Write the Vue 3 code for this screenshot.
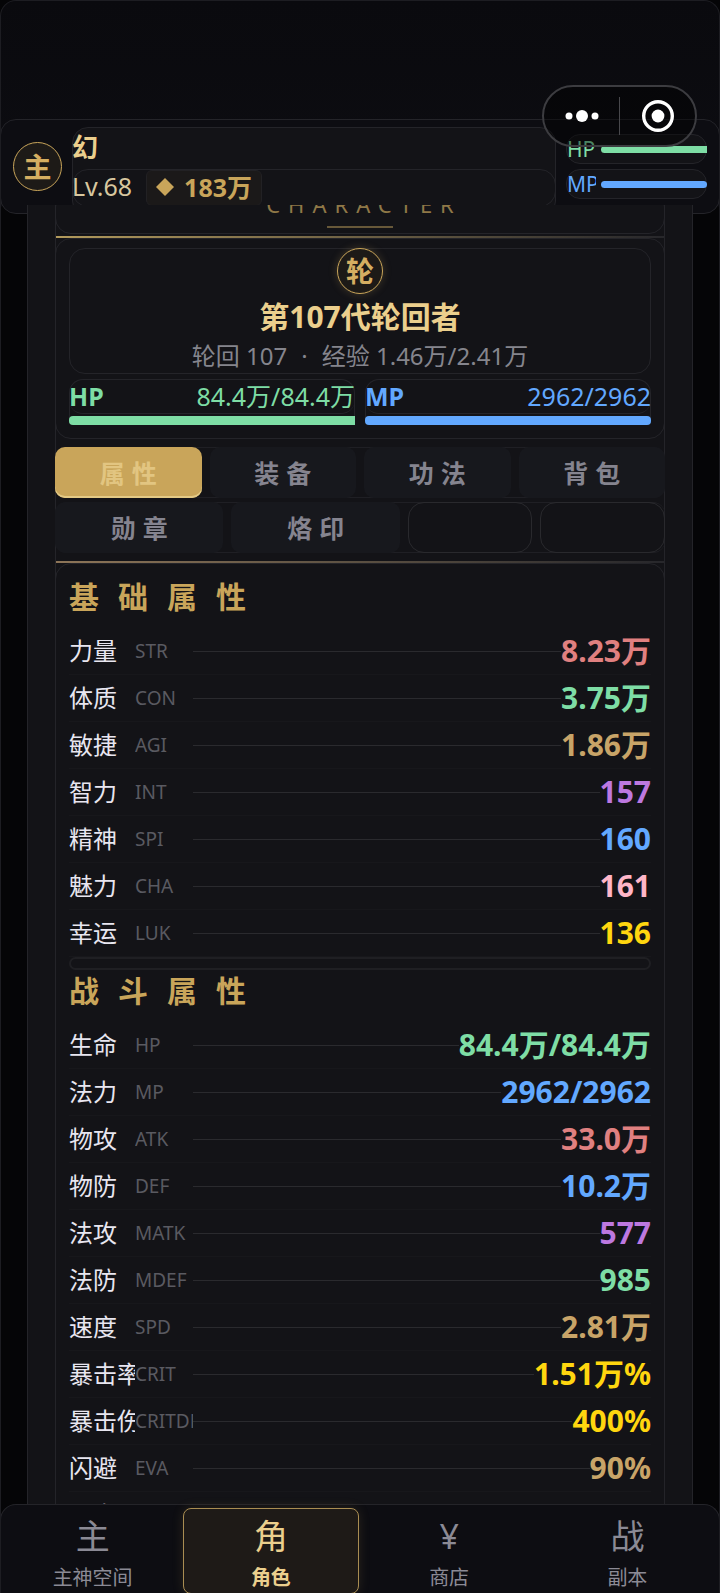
<script setup>
import { ref } from 'vue'

const baseStats = [
  { name: '力量', code: 'STR', value: '8.23万', tone: 'red' },
  { name: '体质', code: 'CON', value: '3.75万', tone: 'green' },
  { name: '敏捷', code: 'AGI', value: '1.86万', tone: 'gold' },
  { name: '智力', code: 'INT', value: '157', tone: 'purple' },
  { name: '精神', code: 'SPI', value: '160', tone: 'blue' },
  { name: '魅力', code: 'CHA', value: '161', tone: 'pink' },
  { name: '幸运', code: 'LUK', value: '136', tone: 'yellow' },
]

const combatStats = [
  { name: '生命', code: 'HP', value: '84.4万/84.4万', tone: 'green' },
  { name: '法力', code: 'MP', value: '2962/2962', tone: 'blue' },
  { name: '物攻', code: 'ATK', value: '33.0万', tone: 'red' },
  { name: '物防', code: 'DEF', value: '10.2万', tone: 'blue' },
  { name: '法攻', code: 'MATK', value: '577', tone: 'purple' },
  { name: '法防', code: 'MDEF', value: '985', tone: 'green' },
  { name: '速度', code: 'SPD', value: '2.81万', tone: 'gold' },
  { name: '暴击率', code: 'CRIT', value: '1.51万%', tone: 'yellow' },
  { name: '暴击伤害', code: 'CRITDMG', value: '400%', tone: 'yellow' },
  { name: '闪避', code: 'EVA', value: '90%', tone: 'gold' },
  { name: '吸血', code: 'LS', value: '20%', tone: 'red' },
]

const groups = [
  { title: '基础属性', rows: baseStats },
  { title: '战斗属性', rows: combatStats },
]

const tabs = ['属性', '装备', '功法', '背包']
const moreTabs = ['勋章', '烙印']
const activeTab = ref('属性')

const navItems = [
  { icon: '主', label: '主神空间' },
  { icon: '角', label: '角色' },
  { icon: '¥', label: '商店' },
  { icon: '战', label: '副本' },
]
const activeNav = ref('角色')
</script>

<template>
  <div class="app">
    <header class="header">
      <div class="avatar">主</div>
      <div class="who">
        <div class="name">幻</div>
        <div class="level-row">
          <span class="level">Lv.68</span>
          <span class="coins">
            <svg width="18" height="18" viewBox="0 0 18 18" aria-hidden="true"><path d="M9 0l9 9-9 9-9-9z" fill="#c9a55a" /></svg>
            183万
          </span>
        </div>
      </div>
      <div class="mini">
        <div class="mini-row green"><span>HP</span><i class="bar"></i></div>
        <div class="mini-row blue"><span>MP</span><i class="bar round"></i></div>
      </div>
      <div class="capsule">
        <button type="button" aria-label="更多">
          <svg width="34" height="14" viewBox="0 0 34 14"><g fill="#fff"><circle cx="4" cy="7" r="3.5" /><circle cx="17" cy="7" r="6" /><circle cx="30" cy="7" r="3.5" /></g></svg>
        </button>
        <button type="button" aria-label="关闭">
          <svg width="34" height="34" viewBox="0 0 34 34"><circle cx="17" cy="17" r="14.3" fill="none" stroke="#fff" stroke-width="3.4" /><circle cx="17" cy="17" r="6.4" fill="#fff" /></svg>
        </button>
      </div>
    </header>

    <main class="main">
      <div class="panel">
        <div class="column">
          <section class="card heading">
            <div class="heading-text">CHARACTER</div>
            <div class="heading-dash"></div>
          </section>

          <div class="rule"></div>
          <section class="card profile">
            <div class="identity">
              <div class="avatar small">轮</div>
              <h1>第107代轮回者</h1>
              <p>轮回 107<span class="dot">·</span>经验 1.46万/2.41万</p>
            </div>
            <div class="vitals">
              <div class="vital green">
                <div class="vital-row"><b>HP</b><span>84.4万/84.4万</span></div>
                <i class="bar"></i>
              </div>
              <div class="vital blue">
                <div class="vital-row"><b>MP</b><span>2962/2962</span></div>
                <i class="bar round"></i>
              </div>
            </div>
          </section>

          <div class="tabs">
            <button v-for="t in tabs" :key="t" type="button" class="tab" :class="{ active: t === activeTab }" @click="activeTab = t">{{ t }}</button>
          </div>
          <div class="tabs second">
            <button v-for="t in moreTabs" :key="t" type="button" class="tab" :class="{ active: t === activeTab }" @click="activeTab = t">{{ t }}</button>
            <div class="slot"></div>
            <div class="slot"></div>
          </div>

          <div class="rule lower"></div>
          <section class="card stats">
            <template v-for="(g, i) in groups" :key="g.title">
              <div v-if="i" class="split"></div>
              <h2>{{ g.title }}</h2>
              <div v-for="s in g.rows" :key="s.code" class="stat">
                <span class="stat-name">{{ s.name }}</span>
                <span class="stat-code">{{ s.code }}</span>
                <span class="stat-line"></span>
                <b class="stat-value" :class="s.tone">{{ s.value }}</b>
              </div>
            </template>
          </section>
        </div>
      </div>
    </main>

    <nav class="nav">
      <button v-for="n in navItems" :key="n.label" type="button" class="nav-item" :class="{ active: n.label === activeNav }" @click="activeNav = n.label">
        <span class="nav-icon">{{ n.icon }}</span>
        <span class="nav-label">{{ n.label }}</span>
      </button>
    </nav>
  </div>
</template>

<style>
body {
  margin: 0;
  background: #050507;
}
</style>

<style scoped>
.app,
.app * {
  box-sizing: border-box;
}
.app {
  --line: #242429;
  --surface: #131317;
  --gold: #c9a55a;
  --gold-light: #ebcf8d;
  height: 100vh;
  display: flex;
  flex-direction: column;
  overflow: hidden;
  position: relative;
  padding-top: 118px;
  border: 1px solid #1d1d22;
  border-bottom: 0;
  border-radius: 16px 16px 0 0;
  background: linear-gradient(#0a0a0e, #0d0d12 205px, #050507 206px);
  color: #e8e6f0;
  font-family: "Noto Sans", "Noto Sans CJK SC", sans-serif;
}
button {
  font-family: inherit;
  border: 0;
  padding: 0;
  background: none;
  color: inherit;
}
.green { color: #7edda5; }
.blue { color: #62a8ff; }
.red { color: #e08080; }
.gold { color: #c8a468; }
.purple { color: #bd78e0; }
.pink { color: #ffb6c8; }
.yellow { color: #ffd60f; }
.bar {
  display: block;
  background: currentColor;
  border-radius: 4px 0 0 4px;
}
.bar.round { border-radius: 4px; }

.header {
  flex: none;
  height: 95px;
  margin: 0 -1px -9px;
  padding: 7px 12px 0;
  display: flex;
  border: 1px solid var(--line);
  border-radius: 16px;
  background: #0d0d12;
}
.avatar {
  flex: none;
  width: 49px;
  height: 49px;
  margin-top: 15px;
  display: flex;
  align-items: center;
  justify-content: center;
  border: 1px solid var(--gold);
  border-radius: 50%;
  background: #1d1a17;
  color: #d5ae61;
  font-size: 28px;
  line-height: 1;
  font-weight: 700;
}
.who {
  flex: 1;
  height: 90px;
  margin: 0 10px;
  border: 1px solid var(--line);
  border-radius: 16px;
  background: var(--surface);
}
.name {
  height: 41px;
  margin: 0 -1px;
  line-height: 38px;
  font-size: 26px;
  font-weight: 700;
  color: var(--gold-light);
}
.level-row {
  display: flex;
  height: 38px;
  margin: 0 -1px;
  border: 1px solid var(--line);
  border-radius: 16px;
  line-height: 32px;
}
.level {
  margin-left: -1px;
  color: #d8c79f;
  font-size: 25px;
}
.coins {
  display: flex;
  align-items: center;
  gap: 10px;
  margin-left: 14px;
  padding: 0 9px 2px;
  border: 1px solid #222124;
  border-radius: 6px;
  background: #1b1919;
  color: var(--gold);
  font-size: 25px;
  font-weight: 700;
}
.mini {
  width: 141px;
  margin-top: 7px;
}
.mini-row {
  display: flex;
  align-items: center;
  height: 30px;
  margin-bottom: 5px;
  border: 1px solid var(--line);
  border-radius: 14px;
  background: var(--surface);
  font-size: 21px;
  line-height: 28px;
}
.mini-row span {
  width: 29px;
  margin-right: 5px;
  overflow: hidden;
}
.mini-row .bar {
  flex: 1;
  height: 7px;
  margin-right: -1px;
}
.capsule {
  position: absolute;
  z-index: 2;
  top: 84px;
  right: 22px;
  width: 155px;
  height: 62px;
  display: flex;
  align-items: center;
  border: 2px solid #3c3c40;
  border-radius: 31px;
  background: rgba(0, 0, 0, 0.4);
}
.capsule button {
  flex: 1;
  height: 38px;
  display: flex;
  align-items: center;
  justify-content: center;
}
.capsule button + button { border-left: 1px solid #48484c; }

.main {
  flex: 1;
  min-height: 0;
  overflow: hidden;
  position: relative;
}
.panel {
  margin: 0 26px;
  padding: 0 27px;
  border: 1px solid var(--line);
  border-width: 0 1px;
  background: var(--surface);
}
.column {
  margin-top: -14px;
  border: 1px solid var(--line);
  border-width: 0 1px;
}
.card {
  margin: 0 -1px;
  border: 1px solid var(--line);
  border-radius: 16px;
}
.heading {
  height: 43px;
  display: flex;
  flex-direction: column;
  align-items: center;
}
.heading-text {
  margin-left: 8px;
  font-size: 22px;
  line-height: 24px;
  letter-spacing: 8px;
  color: #8f7847;
}
.heading-dash {
  width: 66px;
  height: 2px;
  margin-top: 10px;
  background: #675839;
}
.rule {
  height: 2px;
  margin-top: 2px;
  background: linear-gradient(90deg, #b29a5c, #6d6044 50%, #27272b);
}
.profile {
  padding: 9px 13px 13px;
}
.identity {
  display: flex;
  flex-direction: column;
  align-items: center;
  height: 126px;
  border: 1px solid var(--line);
  border-radius: 16px;
}
.avatar.small {
  width: 46px;
  height: 46px;
  margin-top: -1px;
  box-shadow: 0 0 8px rgba(201, 165, 90, 0.25);
}
h1 {
  margin: 2px 0 0;
  font-size: 30px;
  line-height: 42px;
  color: var(--gold-light);
}
p {
  margin: 0;
  font-size: 24px;
  line-height: 36px;
  color: #85858d;
}
.dot { margin: 0 14px; }
.vitals {
  display: grid;
  grid-template-columns: 1fr 1fr;
  gap: 10px;
  margin-top: 5px;
}
.vital {
  border: 1px solid var(--line);
  border-radius: 14px 14px 4px 4px;
  border-bottom: 0;
}
.vital-row {
  display: flex;
  justify-content: space-between;
  height: 34px;
  margin: 0 -1px;
  font-size: 25px;
  line-height: 32px;
  border-bottom: 1px solid var(--line);
  border-radius: 14px;
}
.vital .bar {
  height: 9px;
  margin: 2px -1px 0;
}
.tabs {
  display: grid;
  grid-template-columns: repeat(4, 1fr);
  gap: 8px;
  height: 51px;
  margin: 8px -1px 0;
  border: 1px solid #1f1f24;
  border-width: 1px 0;
  border-radius: 12px;
}
.tabs.second {
  grid-template-columns: 169fr 169fr 125fr 125fr;
  margin-top: 4px;
}
.tab {
  margin: -1px 0;
  padding-left: 7px;
  border-radius: 10px;
  background: #17181d;
  color: #85848f;
  font-size: 25px;
  font-weight: 700;
  letter-spacing: 7px;
  line-height: 34px;
}
.tab.active {
  background: var(--gold);
  color: #e2c581;
  box-shadow: inset 0 -2px #e3c985;
}
.slot {
  margin: -1px 0;
  border: 1px solid #29292d;
  border-radius: 16px;
}
.rule.lower {
  margin-top: 8px;
  background: linear-gradient(90deg, #8d7558, #5b5042 50%, #27272b);
}
.stats { padding: 0 13px; }
h2 {
  margin: 0;
  padding: 12px 0 10px;
  font-size: 30px;
  line-height: 42px;
  letter-spacing: 19px;
  color: var(--gold);
}
.stat {
  display: flex;
  align-items: center;
  height: 47px;
  border-bottom: 1px solid #17171b;
  white-space: nowrap;
}
.stat-name {
  width: 66px;
  overflow: hidden;
  font-size: 24px;
  line-height: 36px;
}
.stat-code {
  width: 58px;
  overflow: hidden;
  font-size: 19px;
  line-height: 30px;
  color: #5a5a61;
}
.stat-line {
  flex: 1;
  height: 1px;
  background: #2a2a2e;
}
.stat-value {
  font-size: 30px;
  line-height: 40px;
}
.split {
  height: 13px;
  border: 2px solid #1f1f23;
  border-radius: 7px;
}
.split + h2 { padding: 0 0 10px; }

.nav {
  flex: none;
  position: relative;
  display: grid;
  grid-template-columns: repeat(4, 1fr);
  gap: 3px;
  height: 89px;
  margin: 0 -1px;
  padding: 3px 4px 0;
  border: 1px solid var(--line);
  border-bottom: 0;
  border-radius: 16px 16px 0 0;
  background: #0d0d12;
}
.nav-item {
  display: flex;
  flex-direction: column;
  align-items: center;
  border: 1px solid transparent;
  border-radius: 8px;
  color: #8b8a95;
}
.nav-item.active {
  border-color: #a98d52;
  background: #1e1a17;
  color: var(--gold-light);
  box-shadow: 0 0 12px rgba(201, 165, 90, 0.15);
}
.nav-icon {
  font-size: 34px;
  line-height: 54px;
}
.nav-label {
  font-size: 20px;
  line-height: 30px;
}
.active .nav-label { font-weight: 700; }
</style>
